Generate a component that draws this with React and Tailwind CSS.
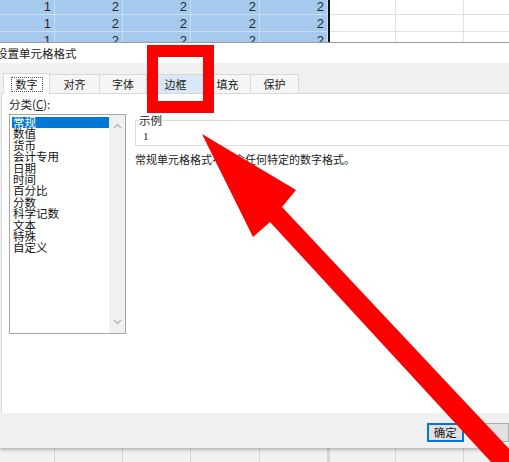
import React from 'react';

const cjk = "font-['Noto_Sans_CJK_SC','Noto_Sans',sans-serif]";

const cols = [55, 68, 68, 69, 68];
const rightCols = [66, 68, 68];

function SheetRow({ values, blank }) {
  return (
    <div className="flex h-[17px]">
      {cols.map((w, i) => (
        <div
          key={i}
          style={{ width: w }}
          className={`h-full shrink-0 border-b border-r border-[#c9dcf1] ${blank ? 'bg-[#f1f1f1] border-[#d6d6d6]' : 'bg-[#a6c9ee]'} flex items-end justify-end pr-[3px] pb-[0px] text-[13px] leading-[15px] text-[#2a2a2a] font-['Liberation_Sans',sans-serif]`}
        >
          {blank ? '' : values[i]}
        </div>
      ))}
      <div className={`w-[2px] h-full shrink-0 ${blank ? 'bg-[#d6d6d6] w-[1px]' : 'bg-[#111]'}`} />
      {rightCols.map((w, i) => (
        <div key={i} style={{ width: w }} className={`h-full shrink-0 border-b border-r ${blank ? 'bg-[#f1f1f1] border-[#d6d6d6]' : 'bg-white border-[#e2e2e2]'}`} />
      ))}
    </div>
  );
}

const tabs = [
  { label: '数字', w: 47, active: true },
  { label: '对齐', w: 51 },
  { label: '字体', w: 48 },
  { label: '边框', w: 59, hover: true },
  { label: '填充', w: 47 },
  { label: '保护', w: 49 },
];

const items = ['常规', '数值', '货币', '会计专用', '日期', '时间', '百分比', '分数', '科学记数', '文本', '特殊', '自定义'];

function Chevron({ down }) {
  return (
    <svg width="9" height="6" viewBox="0 0 9 6" className="text-[#b5b5b5]">
      <path d={down ? 'M1 1 L4.5 4.5 L8 1' : 'M1 5 L4.5 1.5 L8 5'} fill="none" stroke="currentColor" strokeWidth="1.3" />
    </svg>
  );
}

export default function App() {
  return (
    <div className={`relative w-[509px] h-[462px] overflow-hidden bg-white flex flex-col ${cjk}`}>
      {/* sheet behind dialog */}
      <div className="h-[42px] shrink-0 overflow-hidden">
        <div className="-mt-[2px]">
          <SheetRow values={['1', '2', '2', '2', '2']} />
          <SheetRow values={['1', '2', '2', '2', '2']} />
          <SheetRow values={['1', '2', '2', '2', '2']} />
        </div>
      </div>

      {/* dialog */}
      <div className="shrink-0 flex flex-col border-t border-[#9c9c9c] bg-[#f0f0f0] shadow-[0_2px_3px_rgba(0,0,0,0.25)] relative z-10">
        <div className="h-[20px] bg-white flex items-center">
          <span className="-ml-[4px] text-[11.5px] leading-[14px] text-[#222]">设置单元格格式</span>
        </div>
        <div className="h-[30px] flex items-end pl-[3px] bg-[#f0f0f0]">
          {tabs.map(t => (
            <div
              key={t.label}
              style={{ width: t.w }}
              className={`flex items-center justify-center text-[11px] text-[#222] border border-b-0 border-[#d9d9d9] -ml-[1px] first:ml-0 ${t.active ? 'h-[21px] bg-white relative z-10 mb-[-1px]' : t.hover ? 'h-[19px] bg-[#d9e8f7]' : 'h-[19px] bg-[#f5f5f5]'}`}
            >
              {t.active ? (
                <span className="border border-dotted border-[#555] px-[4px] leading-[13px]">{t.label}</span>
              ) : (
                <span className="leading-[13px]">{t.label}</span>
              )}
            </div>
          ))}
        </div>
        <div className="h-[320px] ml-[1px] bg-white border-t border-l border-[#d9d9d9] flex">
          <div className="w-[124px] shrink-0 pl-[7px] pt-[3px] flex flex-col">
            <div className="text-[11.5px] leading-[14px] text-[#222]">分类(<span className="underline">C</span>):</div>
            <div className="mt-[3px] h-[220px] border border-[#a5a5a5] flex">
              <div className="flex-1 pt-[2px] pl-[2px] flex flex-col">
                {items.map((it, i) => (
                  <div
                    key={it}
                    className={`h-[11.4px] leading-[11.4px] text-[11.5px] pl-[1px] whitespace-nowrap ${i === 0 ? 'bg-[#0078d7] text-white' : 'text-[#111]'}`}
                  >
                    {it}
                  </div>
                ))}
              </div>
              <div className="w-[16px] bg-[#f0f0f0] flex flex-col items-center justify-between py-[8px]">
                <Chevron />
                <Chevron down />
              </div>
            </div>
          </div>
          <div className="flex-1 pl-[9px] pt-[26px] flex flex-col">
            <div className="relative h-[26px] border border-[#dcdcdc] w-[420px]">
              <span className="absolute -top-[8px] left-[3px] bg-white text-[11.5px] leading-[14px] text-[#222]">示例</span>
              <div className="pt-[9px] pl-[7px] text-[11px] leading-[13px] text-[#222] font-['Liberation_Serif',serif]">1</div>
            </div>
            <div className="mt-[6px] text-[11px] leading-[14px] text-[#222] whitespace-nowrap">
              常规单元格格式不包含任何特定的数字格式。
            </div>
          </div>
        </div>
        <div className="h-[35px] flex items-start pt-[10px] pl-[427px] gap-[10px]">
          <div className="w-[70px] h-[19px] border-2 border-[#0078d7] bg-[#e1e1e1] flex items-center justify-center text-[11.5px] text-[#222]">确定</div>
          <div className="w-[70px] h-[19px] border border-[#adadad] bg-[#e1e1e1]" />
        </div>
      </div>

      {/* sheet below */}
      <div className="flex-1 overflow-hidden">
        <SheetRow blank />
      </div>

      {/* red annotation */}
      <div className="absolute left-[147px] top-[45px] w-[67px] h-[68px] border-x-[11px] border-y-[12px] border-[#ff0000] z-20" />
      <svg className="absolute inset-0 z-20" width="509" height="462" viewBox="0 0 509 462">
        <polygon
          points="202,134 296,190 282,207 512,452 512,475 503,475 270,222 253,237"
          fill="#ff0000"
        />
      </svg>
    </div>
  );
}
